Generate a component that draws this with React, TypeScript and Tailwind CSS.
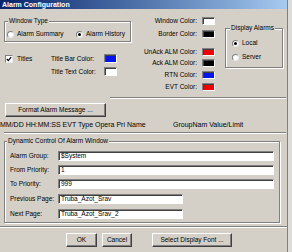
import React from "react";

const Swatch = ({ color, tall }: { color: string; tall?: boolean }) => (
  <div
    className={`w-[13px] ${tall ? "h-[9px]" : "h-[8px]"} shrink-0 border border-t-[#808080] border-l-[#808080] border-b-white border-r-white shadow-[inset_1px_1px_0_#404040] ${color}`}
  />
);

const Radio = ({ checked, label }: { checked?: boolean; label: string }) => (
  <div className="flex items-center h-[8px]">
    <span className="w-[7px] h-[7px] rounded-full bg-white border border-t-[#808080] border-l-[#808080] border-b-[#e8e8e8] border-r-[#e8e8e8] flex items-center justify-center shrink-0">
      {checked && <span className="w-[3px] h-[3px] rounded-full bg-black" />}
    </span>
    <span className="ml-[3px] whitespace-nowrap">{label}</span>
  </div>
);

const Button = ({ label, w }: { label: string; w: string }) => (
  <div
    className={`${w} h-[14px] flex items-center justify-center border border-t-white border-l-white border-b-[#404040] border-r-[#404040] shadow-[inset_-1px_-1px_0_#808080] whitespace-nowrap`}
  >
    {label}
  </div>
);

const Field = ({ label, value, w }: { label: string; value: string; w: string }) => (
  <div className="flex items-center">
    <span className="w-[48px] whitespace-nowrap">{label}</span>
    <div
      className={`${w} h-[10px] flex items-center pl-[2px] bg-white border border-t-[#808080] border-l-[#808080] border-b-white border-r-white shadow-[inset_1px_1px_0_#404040] whitespace-nowrap`}
    >
      {value}
    </div>
  </div>
);

const ColorRow = ({ label, color, mt }: { label: string; color: string; mt: string }) => (
  <div className={`flex justify-end items-center h-[8px] gap-[5px] ${mt}`}>
    <span className="whitespace-nowrap">{label}</span>
    <Swatch color={color} />
  </div>
);

const groupBox =
  "border border-[#808080] shadow-[inset_1px_1px_0_#fff,1px_1px_0_#fff]";

export default function App() {
  return (
    <div className="w-[292px] h-[252px] flex bg-[#dedcd8] font-['Liberation_Sans',Arial,sans-serif] text-[6.5px] leading-[8px] text-black overflow-hidden">
      <div className="w-[288px] h-full flex flex-col bg-[#d4d0c8] border-r border-[#808080]">
        {/* title bar */}
        <div className="h-[9px] shrink-0 bg-gradient-to-r from-[#0a246a] to-[#a6caf0] flex items-center pl-[2px] text-white font-bold text-[7px] leading-[9px]">
          Alarm Configuration
        </div>

        {/* top section */}
        <div className="h-[86px] shrink-0 flex">
          <div className="ml-[4px] w-[127px] flex flex-col">
            <fieldset className={`mt-[8px] ${groupBox}`}>
              <legend className="ml-[3px] px-[1px] bg-[#d4d0c8]">Window Type</legend>
              <div className="flex pt-[5px] pb-[3px] pl-[2px]">
                <div className="w-[69px]">
                  <Radio label="Alarm Summary" />
                </div>
                <Radio checked label="Alarm History" />
              </div>
            </fieldset>

            <div className="mt-[12px] h-[9px] flex items-center">
              <div className="w-[47px] flex items-center pl-[1px]">
                <span className="w-[8px] h-[8px] bg-white border border-t-[#808080] border-l-[#808080] border-b-[#e8e8e8] border-r-[#e8e8e8] flex items-center justify-center">
                  <svg width="6" height="6" viewBox="0 0 6 6">
                    <polyline points="0.8,3 2.3,4.6 5.2,1.2" fill="none" stroke="#000" strokeWidth="1.2" />
                  </svg>
                </span>
                <span className="ml-[4px]">Titles</span>
              </div>
              <span className="w-[53px] whitespace-nowrap">Title Bar Color:</span>
              <Swatch color="bg-[#0014f0]" tall />
            </div>
            <div className="mt-[4px] h-[9px] flex items-center pl-[47px]">
              <span className="w-[53px] whitespace-nowrap">Title Text Color:</span>
              <Swatch color="bg-white" tall />
            </div>
          </div>

          <div className="ml-[2px] w-[82px] flex flex-col">
            <ColorRow label="Window Color:" color="bg-white" mt="mt-[8px]" />
            <ColorRow label="Border Color:" color="bg-black" mt="mt-[5px]" />
            <ColorRow label="UnAck ALM Color:" color="bg-[#f00000]" mt="mt-[10px]" />
            <ColorRow label="Ack ALM Color:" color="bg-black" mt="mt-[3px]" />
            <ColorRow label="RTN Color:" color="bg-[#0014f0]" mt="mt-[4px]" />
            <ColorRow label="EVT Color:" color="bg-[#f00000]" mt="mt-[4px]" />
          </div>

          <div className="ml-[10px] w-[58px] flex flex-col">
            <fieldset className={`mt-[15px] ${groupBox}`}>
              <legend className="ml-[4px] px-[1px] bg-[#d4d0c8]">Display Alarms</legend>
              <div className="flex flex-col pt-[7px] pb-[6px] pl-[6px]">
                <Radio checked label="Local" />
                <div className="mt-[6px]">
                  <Radio label="Server" />
                </div>
              </div>
            </fieldset>
          </div>
        </div>

        <div className="mt-[2px] ml-[110px] w-[176px] h-[2px] border-t border-[#808080] border-b border-b-white" />

        <div className="mt-[4px] ml-[5px]">
          <Button label="Format Alarm Message ..." w="w-[101px]" />
        </div>

        <div className="mt-[4px] h-[8px] flex items-center text-[7px] whitespace-nowrap">
          <span className="w-[173px]">MM/DD HH:MM:SS EVT Type Opera Pri Name</span>
          <span>GroupNam Value/Limit</span>
        </div>

        <div className="mt-[3px] ml-[4px] w-[282px] h-[2px] border-t border-[#808080] border-b border-b-white" />

        <fieldset className={`mt-[3px] ml-[4px] w-[276px] ${groupBox}`}>
          <legend className="ml-[2px] px-[1px] bg-[#d4d0c8]">Dynamic Control Of Alarm Window</legend>
          <div className="flex flex-col pt-[6px] pb-[3px] pl-[5px]">
            <Field label="Alarm Group:" value="$System" w="w-[216px]" />
            <div className="mt-[4px]">
              <Field label="From Priority:" value="1" w="w-[216px]" />
            </div>
            <div className="mt-[4px]">
              <Field label="To Priority:" value="999" w="w-[216px]" />
            </div>
            <div className="mt-[5px]">
              <Field label="Previous Page:" value="Truba_Azot_Srav" w="w-[125px]" />
            </div>
            <div className="mt-[5px]">
              <Field label="Next Page:" value="Truba_Azot_Srav_2" w="w-[125px]" />
            </div>
          </div>
        </fieldset>

        <div className="mt-[3px] w-[287px] h-[2px] border-t border-[#808080] border-b border-b-white" />

        <div className="mt-[5px] flex">
          <div className="ml-[66px]">
            <Button label="OK" w="w-[31px]" />
          </div>
          <div className="ml-[5px]">
            <Button label="Cancel" w="w-[30px]" />
          </div>
          <div className="ml-[20px]">
            <Button label="Select Display Font ..." w="w-[80px]" />
          </div>
        </div>
      </div>
    </div>
  );
}
